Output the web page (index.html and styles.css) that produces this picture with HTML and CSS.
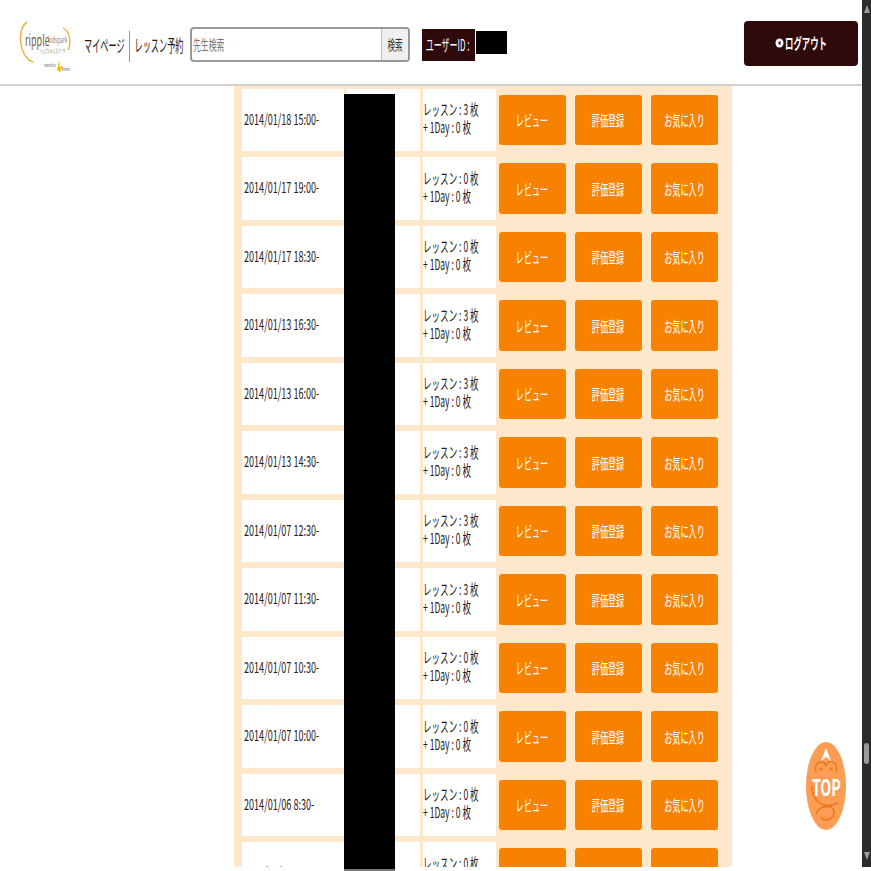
FILE: index.html
```html
<!doctype html>
<html lang="ja">
  <head>
    <meta charset="utf-8" />
    <meta name="viewport" content="width=device-width, initial-scale=1" />
    <title>レッスン履歴</title>
    <link rel="stylesheet" href="styles.css">
  </head>
  <body>
    <div class="page">
      <header class="header">
        <div class="logo">
          <svg width="72" height="56" viewBox="0 0 72 56">
            <path d="M8 2C-2 8 -1 36 14 42" fill="none" stroke="#f3ae36" stroke-width="1.5" />
            <path d="M44 8C52 12 52 24 49 30" fill="none" stroke="#f3ae36" stroke-width="1.3" />
            <path d="M40 40l1 7 3-1-3 6-3-2 1-4z" fill="#f2c200" />
          </svg>
          <span class="logo-text logo-name"><span class="squeeze">ripple</span></span>
          <span class="logo-text logo-park"><span class="squeeze">kidspark</span></span>
          <span class="logo-text logo-kana"><span class="squeeze">リップルキッズパーク</span></span>
          <span class="logo-text logo-power"><span class="squeeze">Powered by</span></span>
          <span class="logo-text logo-kimini"><span class="squeeze">Kimini</span></span>
        </div>
        <nav class="nav">
          <a class="nav-link"><span class="squeeze">マイページ</span></a>
          <a class="nav-link"><span class="squeeze">レッスン予約</span></a>
        </nav>
        <div class="search">
          <div class="search-input"><span class="squeeze">先生検索</span></div>
          <div class="search-button"><span class="squeeze">検索</span></div>
        </div>
        <div class="user">
          <div class="user-label"><span class="squeeze">ユーザーID : </span></div>
          <div class="user-id"></div>
        </div>
        <a class="logout">
          <svg width="9" height="10" viewBox="0 0 9 10">
            <ellipse cx="4.5" cy="5" rx="4" ry="4.5" fill="#fff" />
            <path d="M5.5 2.5L3 5l2.5 2.5z" fill="#2e0a0a" />
          </svg>
          <span class="squeeze">ログアウト</span>
        </a>
      </header>

      <main class="main">
        <div class="history" id="history"></div>
        <div class="redacted"></div>
      </main>

      <a class="to-top">
        <svg width="40" height="88" viewBox="0 0 40 88">
          <ellipse cx="20" cy="44" rx="20" ry="44" fill="#fb9d54" />
          <path d="M10 30c-3-10 8-14 10-6 2-8 13-5 10 6M6 44c0 16 12 24 26 17M10 72c3-9 18-10 18-2s-10 10-13 5" fill="none" stroke="#ea7a1c" stroke-width="1.6" />
          <circle cx="15" cy="27" r="1.500" fill="#ea7a1c" />
          <circle cx="25" cy="27" r="1.500" fill="#ea7a1c" />
          <path d="M20 6l5 13-5-4-5 4z" fill="#fff" />
        </svg>
        <span class="to-top-text"><span class="squeeze">TOP</span></span>
      </a>

      <div class="scrollbar">
        <span class="scroll-arrow"></span>
        <span class="scroll-thumb"></span>
        <span class="scroll-arrow scroll-arrow-down"></span>
      </div>
    </div>

    <script>
      // Lesson history rows
      const lessons = [
        ['2014/01/18 15:00-', 3],
        ['2014/01/17 19:00-', 0],
        ['2014/01/17 18:30-', 0],
        ['2014/01/13 16:30-', 3],
        ['2014/01/13 16:00-', 3],
        ['2014/01/13 14:30-', 3],
        ['2014/01/07 12:30-', 3],
        ['2014/01/07 11:30-', 3],
        ['2014/01/07 10:30-', 0],
        ['2014/01/07 10:00-', 0],
        ['2014/01/06 8:30-', 0],
        ['2014/01/06 8:00-', 0]
      ]

      const history = document.getElementById('history')
      history.innerHTML = lessons
        .map(
          ([date, tickets]) => `
          <div class="row">
            <div class="cell cell-date"><span class="squeeze">${date}</span></div>
            <div class="cell cell-teacher"></div>
            <div class="cell cell-tickets">
              <span class="squeeze">レッスン : ${tickets} 枚<br>+ 1Day : 0 枚</span>
            </div>
            <div class="actions">
              <a class="action"><span class="squeeze">レビュー</span></a>
              <a class="action"><span class="squeeze">評価登録</span></a>
              <a class="action"><span class="squeeze">お気に入り</span></a>
            </div>
          </div>`
        )
        .join('')
    </script>
  </body>
</html>
```
FILE: styles.css
```css
:root {
  --peach: #fde8cb;
  --orange: #f78200;
  --dark: #2e0a0a;
  --text: #2b1a1a;
}

html,
body {
  margin: 0;
  padding: 0;
  height: 100%;
  overflow: hidden;
}

body {
  background: #fff;
  color: var(--text);
  font-family: 'Noto Sans CJK JP', 'Liberation Sans', sans-serif;
}

a {
  color: inherit;
  text-decoration: none;
}

/* the whole shot has text squashed sideways */
.squeeze {
  display: inline-block;
  transform: scaleX(0.54);
  white-space: pre;
}

.page {
  position: relative;
  width: 871px;
  height: 871px;
  overflow: hidden;
}

.header {
  height: 84px;
  border-bottom: 2px solid #d2d0ce;
  display: flex;
  align-items: flex-start;
  padding-right: 13px;
}

.logo {
  position: relative;
  width: 72px;
  height: 56px;
  margin: 20px 0 0 19px;
  flex: none;
}

.logo-text {
  position: absolute;
  line-height: 1;
  white-space: nowrap;
}

.logo-text .squeeze {
  transform-origin: left center;
}

.logo-name {
  left: 6px;
  top: 12px;
  font-size: 15px;
  color: #7b5a3a;
}

.logo-name .squeeze {
  transform: scaleX(0.6);
}

.logo-park {
  left: 29px;
  top: 15px;
  font-size: 9px;
  color: #a08060;
}

.logo-kana {
  left: 21px;
  top: 28px;
  font-size: 6px;
  color: #8a7a60;
}

.logo-kana .squeeze {
  transform: scaleX(0.42);
}

.logo-power {
  left: 25px;
  top: 43px;
  font-size: 4px;
  color: #555;
}

.logo-kimini {
  left: 43px;
  top: 46px;
  font-size: 5px;
  color: #555;
}

.nav {
  display: flex;
  height: 31px;
  margin: 31px 0 0 -7px;
  font-size: 17px;
  line-height: 28px;
}

.nav-link {
  display: flex;
  justify-content: center;
}

.nav-link .squeeze {
  transform: scaleX(0.48);
}

.nav-link:first-child {
  width: 41px;
  padding-right: 4px;
  border-right: 1px solid #9a9a9a;
}

.nav-link:last-child {
  width: 48px;
  margin-left: 5px;
}

.search {
  display: flex;
  width: 220px;
  height: 35px;
  margin: 27px 0 0 7px;
  border: 2px solid #999;
  border-radius: 4px;
  box-sizing: border-box;
  font-size: 14px;
  line-height: 30px;
  overflow: hidden;
}

.search-input {
  flex: 1;
  color: #777;
  border-right: 1px solid #bbb;
}

.search-input .squeeze {
  transform-origin: left center;
  transform: scaleX(0.56);
  margin-left: 1px;
}

.search-button {
  width: 26px;
  flex: none;
  background: #f0f0f0;
  color: #333;
  display: flex;
  justify-content: center;
}

.user {
  display: flex;
  align-items: flex-start;
  margin: 29px 0 0 12px;
}

.user-label {
  width: 53px;
  height: 32px;
  background: var(--dark);
  color: #fff;
  font-size: 16px;
  line-height: 31px;
  display: flex;
  justify-content: center;
}

.user-label .squeeze {
  transform: scaleX(0.5);
}

.user-id {
  width: 31px;
  height: 23px;
  margin: 2px 0 0 1px;
  background: #000;
}

.logout {
  width: 114px;
  height: 45px;
  margin: 21px 0 0 auto;
  padding-left: 31px;
  box-sizing: border-box;
  background: var(--dark);
  color: #fff;
  border-radius: 4px;
  font-size: 15px;
  font-weight: 700;
  display: flex;
  align-items: center;
}

.logout .squeeze {
  transform-origin: left center;
  transform: scaleX(0.56);
  padding-bottom: 3px;
}

.logout svg {
  flex: none;
  margin-right: 1px;
  margin-bottom: 2px;
}

.main {
  position: relative;
  height: 781px;
}

.history {
  width: 498px;
  height: 781px;
  margin-left: 234px;
  padding: 2.9px 0 0 8px;
  box-sizing: border-box;
  background: var(--peach);
  display: flex;
  flex-direction: column;
  gap: 6px;
  overflow: hidden;
}

.row {
  display: flex;
  flex: none;
  height: 62.5px;
  gap: 3px;
  font-size: 15px;
  line-height: 18px;
}

.cell {
  background: #fff;
  display: flex;
  align-items: center;
  overflow: hidden;
}

.cell-date {
  width: 102px;
  flex: none;
  padding: 0 0 3px 2px;
  box-sizing: border-box;
}

.cell-date .squeeze {
  transform-origin: left center;
  transform: scaleX(0.605);
}

.cell-teacher {
  width: 73px;
  flex: none;
}

.cell-tickets {
  width: 73px;
  flex: none;
  padding-bottom: 4px;
  box-sizing: border-box;
}

.cell-tickets .squeeze {
  transform-origin: left center;
  transform: scaleX(0.57);
}

.actions {
  display: flex;
  gap: 9px;
  padding-top: 6px;
}

.action {
  width: 67px;
  height: 50.5px;
  background: var(--orange);
  border-radius: 3px;
  color: #fff;
  display: flex;
  align-items: center;
  justify-content: center;
}

.redacted {
  position: absolute;
  left: 344px;
  top: 8px;
  width: 51px;
  height: 775px;
  background: #000;
  border-bottom: 2px solid #777;
}

.to-top {
  position: absolute;
  left: 806px;
  top: 742px;
  width: 40px;
  height: 88px;
}

.to-top-text {
  position: absolute;
  left: 0;
  right: 0;
  top: 29px;
  display: flex;
  justify-content: center;
  color: #fff;
  font-size: 23px;
  font-weight: 700;
  line-height: 30px;
}

.to-top-text .squeeze {
  transform: scaleX(0.62);
}

.scrollbar {
  position: absolute;
  right: 0;
  top: 0;
  width: 9px;
  height: 867px;
  background: #2b2b2b;
  display: flex;
  flex-direction: column;
  align-items: center;
}

.scroll-arrow {
  margin-top: 5px;
  border-left: 3px solid transparent;
  border-right: 3px solid transparent;
  border-bottom: 8px solid #9b9b9b;
}

.scroll-arrow-down {
  margin-top: auto;
  margin-bottom: 7px;
  border-bottom: 0;
  border-top: 8px solid #9b9b9b;
}

.scroll-thumb {
  position: absolute;
  top: 743px;
  width: 5px;
  height: 21px;
  border-radius: 3px;
  background: #9b9b9b;
}
```
